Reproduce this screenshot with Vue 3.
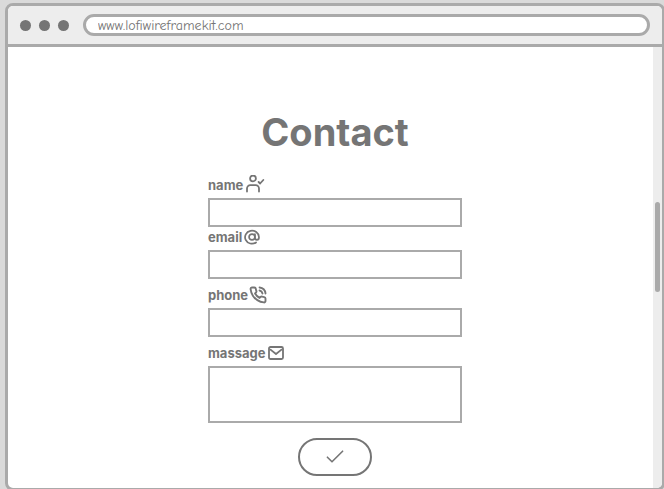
<script setup>
import { ref } from 'vue'

const address = ref('www.lofiwireframekit.com')
const form = ref({ name: '', email: '', phone: '', message: '' })
</script>

<template>
  <div class="browser">
    <header class="toolbar">
      <div class="dots">
        <span class="dot"></span>
        <span class="dot"></span>
        <span class="dot"></span>
      </div>
      <input v-model="address" class="address" type="text" aria-label="Address" />
    </header>

    <div class="viewport">
      <main class="page">
        <h1 class="title">Contact</h1>
        <form class="form" @submit.prevent>
          <div class="field">
            <label class="label" for="name">
              <span>name</span>
              <svg class="icon person" viewBox="0 0 20 20" aria-hidden="true">
                <circle cx="8" cy="3.4" r="2.9" />
                <path d="M2 16.6v-3a3.4 3.4 0 0 1 3.4-3.4h5.2a3.4 3.4 0 0 1 3.4 3.4v3M13.6 7l1.5 1.5 3.2-3.5" />
              </svg>
            </label>
            <input id="name" v-model="form.name" class="control" type="text" />
          </div>

          <div class="field">
            <label class="label" for="email">
              <span>email</span>
              <svg class="icon at" viewBox="0 0 24 24" aria-hidden="true">
                <circle cx="12" cy="12" r="4.4" />
                <path d="M16.4 7.6v5.6a3 3 0 0 0 6 0V12a10.4 9.8 0 1 0-4.3 8.2" />
              </svg>
            </label>
            <input id="email" v-model="form.email" class="control" type="email" />
          </div>

          <div class="field spaced">
            <label class="label tight" for="phone">
              <span>phone</span>
              <svg class="icon call" viewBox="0 0 24 24" aria-hidden="true">
                <path d="M14.05 6A5 5 0 0 1 18 9.95M14.05 2A9 9 0 0 1 22 9.94M22 16.92v3a2 2 0 0 1-2.18 2 19.8 19.8 0 0 1-8.63-3.07 19.5 19.5 0 0 1-6-6A19.8 19.8 0 0 1 2.12 4.18 2 2 0 0 1 4.11 2h3a2 2 0 0 1 2 1.72 12.8 12.8 0 0 0 .7 2.81 2 2 0 0 1-.45 2.11L8.09 9.91a16 16 0 0 0 6 6l1.27-1.27a2 2 0 0 1 2.11-.45 12.8 12.8 0 0 0 2.81.7A2 2 0 0 1 22 16.92z" />
              </svg>
            </label>
            <input id="phone" v-model="form.phone" class="control" type="tel" />
          </div>

          <div class="field spaced">
            <label class="label wide" for="message">
              <span>massage</span>
              <svg class="icon mail" viewBox="0 0 16 14" aria-hidden="true">
                <rect x="1" y="1" width="14" height="12" rx="1.5" />
                <path d="M2.5 3.6 8 8l5.5-4.4" />
              </svg>
            </label>
            <textarea id="message" v-model="form.message" class="control area"></textarea>
          </div>

          <button class="submit" type="submit" aria-label="Send">
            <svg class="check" viewBox="0 0 18 14" aria-hidden="true">
              <path d="M1.4 7.2 6 11.8 16.6 1.2" />
            </svg>
          </button>
        </form>
      </main>
      <div class="scrollbar"><div class="thumb"></div></div>
    </div>
  </div>
</template>

<style>
body {
  background: #dadada;
  overflow: hidden;
}
</style>

<style scoped>
.browser {
  box-sizing: border-box;
  display: flex;
  flex-direction: column;
  height: calc(100vh - 1px);
  margin: 3px -1px 0 5px;
  border: 3px solid #aaa;
  border-radius: 8px;
  background: #fff;
  overflow: hidden;
  color: #757575;
  font-family: Inter, "Liberation Sans", sans-serif;
}

.toolbar {
  display: flex;
  align-items: center;
  gap: 14px;
  padding: 8px 12px;
  border-bottom: 3px solid #aaa;
  background: #ededed;
}

.dots {
  display: flex;
  gap: 8px;
}

.dot {
  width: 11px;
  height: 11px;
  border-radius: 50%;
  background: #757575;
}

.address {
  box-sizing: border-box;
  flex: 1;
  min-width: 0;
  height: 22px;
  padding: 0 12px;
  border: 3px solid #aaa;
  border-radius: 11px;
  background: #fff;
  color: #757575;
  font-family: "Comic Neue", "Comic Sans MS", Lato, sans-serif;
  font-size: 14px;
  line-height: 16px;
  outline: none;
}

.viewport {
  position: relative;
  flex: 1;
}

.page {
  display: flex;
  flex-direction: column;
  align-items: center;
  padding-top: 61px;
}

.title {
  margin: 0;
  font-size: 38px;
  font-weight: 700;
  line-height: 48px;
}

.form {
  display: flex;
  flex-direction: column;
  width: 254px;
  max-width: 100%;
  padding-top: 19px;
}

.field {
  display: flex;
  flex-direction: column;
}

.spaced {
  padding-top: 6px;
}

.label {
  box-sizing: border-box;
  display: flex;
  align-items: center;
  gap: 2px;
  height: 23px;
  padding-bottom: 4px;
  font-size: 13px;
  font-weight: 700;
  line-height: 16px;
}

.tight {
  gap: 1px;
}

.wide {
  gap: 3px;
}

.icon {
  fill: none;
  stroke: currentColor;
  stroke-linecap: round;
  stroke-linejoin: round;
}

.person {
  width: 20px;
  height: 20px;
  stroke-width: 1.8;
}

.at {
  width: 16px;
  height: 16px;
  stroke-width: 2.6;
}

.call {
  width: 18px;
  height: 18px;
  stroke-width: 2.5;
}

.mail {
  width: 16px;
  height: 14px;
  stroke-width: 1.8;
}

.control {
  box-sizing: border-box;
  display: block;
  width: 100%;
  height: 29px;
  margin: 0;
  padding: 4px 8px;
  border: 2px solid #aaa;
  border-radius: 0;
  background: #fff;
  color: #757575;
  font: inherit;
  font-size: 13px;
  outline: none;
}

.area {
  height: 57px;
  resize: none;
}

.submit {
  display: flex;
  align-items: center;
  justify-content: center;
  align-self: center;
  width: 74px;
  height: 38px;
  margin-top: 15px;
  padding: 0;
  border: 2px solid #757575;
  border-radius: 19px;
  background: #fff;
  color: #757575;
}

.check {
  width: 18px;
  height: 14px;
  fill: none;
  stroke: currentColor;
  stroke-width: 1.6;
  stroke-linecap: round;
  stroke-linejoin: round;
}

.scrollbar {
  position: absolute;
  top: 0;
  right: 0;
  bottom: 0;
  display: flex;
  justify-content: center;
  width: 9px;
  background: #ededed;
}

.thumb {
  width: 5px;
  height: 90px;
  margin-top: 155px;
  border-radius: 3px;
  background: #aaa;
}
</style>
